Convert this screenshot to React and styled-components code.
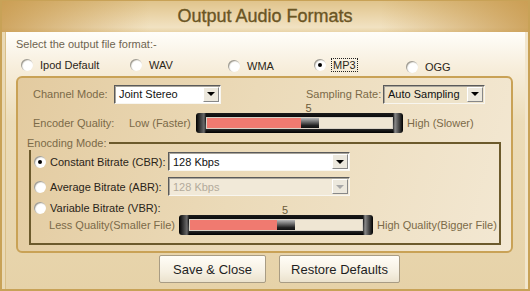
import styled, { createGlobalStyle } from 'styled-components';

const GlobalStyle = createGlobalStyle`
  html, body {
    margin: 0;
    padding: 0;
    background: #ffffff;
  }
  body {
    font-family: "Liberation Sans", Arial, sans-serif;
    font-size: 11px;
  }
`;

const FORMATS = [
  { name: 'Ipod Default', width: 109, drop: 0 },
  { name: 'WAV', width: 98, drop: 0 },
  { name: 'WMA', width: 86, drop: 1 },
  { name: 'MP3', width: 92, drop: 0, checked: true },
  { name: 'OGG', width: 80, drop: 3 },
];

function Radio({ checked }) {
  return <RadioDot $checked={checked} />;
}

function Dropdown({ value, width, $tint, disabled }) {
  return (
    <SelectBox $width={width} $tint={$tint} $disabled={disabled}>
      <SelectValue $disabled={disabled}>{value}</SelectValue>
      <DropButton>
        <Arrow $disabled={disabled} />
      </DropButton>
    </SelectBox>
  );
}

function Slider({ width, value, max }) {
  const track = width - 20;
  const pos = (value / max) * track;
  return (
    <SliderFrame $width={width}>
      <Tick style={{ left: 10 + pos + 9 }}>{value}</Tick>
      <Track>
        <Fill style={{ width: pos }} />
        <Thumb />
        <Rest />
      </Track>
    </SliderFrame>
  );
}

function App() {
  return (
    <>
      <GlobalStyle />
      <Window>
        <TitleBar>Output Audio Formats</TitleBar>
        <Body>
          <Prompt>Select the output file format:-</Prompt>
          <FormatRow>
            {FORMATS.map((f) => (
              <FormatOption key={f.name} $width={f.width} $drop={f.drop}>
                <Radio checked={f.checked} />
                <OptionText $focus={f.checked}>{f.name}</OptionText>
              </FormatOption>
            ))}
          </FormatRow>

          <Panel>
            <PanelRow>
              <FieldLabel $width={81}>Channel Mode:</FieldLabel>
              <Dropdown value="Joint Stereo" width={107} />
              <FieldLabel $width={77} $gap={85}>
                Sampling Rate:
              </FieldLabel>
              <Dropdown value="Auto Sampling" width={102} $tint />
            </PanelRow>

            <PanelRow $top={9}>
              <FieldLabel $width={96}>Encoder Quality:</FieldLabel>
              <FieldLabel $width={67}>Low (Faster)</FieldLabel>
              <Slider width={207} value={5} max={10} />
              <FieldLabel $gap={4}>High (Slower)</FieldLabel>
            </PanelRow>

            <Group>
              <Legend>Enocding Mode:</Legend>
              <ModeRow>
                <Radio checked />
                <ModeText>Constant Bitrate (CBR):</ModeText>
                <Dropdown value="128 Kbps" width={182} />
              </ModeRow>
              <ModeRow $top={6}>
                <Radio />
                <ModeText>Average Bitrate (ABR):</ModeText>
                <Dropdown value="128 Kbps" width={182} disabled />
              </ModeRow>
              <ModeRow $top={5} $short>
                <Radio />
                <ModeText>Variable Bitrate (VBR):</ModeText>
              </ModeRow>
              <VbrRow>
                <FieldLabel $width={145} $right>
                  Less Quality(Smaller File)
                </FieldLabel>
                <Slider width={194} value={5} max={10} />
                <FieldLabel $gap={4}>High Quality(Bigger File)</FieldLabel>
              </VbrRow>
            </Group>
          </Panel>

          <ButtonRow>
            <Button $width={107}>Save &amp; Close</Button>
            <Button $width={121}>Restore Defaults</Button>
          </ButtonRow>
        </Body>
      </Window>
    </>
  );
}

export default App;

// STYLES
const Window = styled.div`
  width: 530px;
  height: 291px;
  box-sizing: border-box;
  border: 2px solid #c8a257;
  border-top-width: 1px;
  display: flex;
  flex-direction: column;
  overflow: hidden;
  background: #e6d2a8;
`;

const TitleBar = styled.div`
  height: 31px;
  flex: none;
  text-align: center;
  line-height: 31px;
  font-size: 18px;
  color: #6a5524;
  -webkit-text-stroke: 0.35px #6a5524;
  background:
    linear-gradient(to right, rgba(196, 146, 66, 0.75), rgba(196, 146, 66, 0) 28%, rgba(196, 146, 66, 0) 72%, rgba(196, 146, 66, 0.75)),
    linear-gradient(to bottom, #e0c48c, #ead4a8 45%, #f1e2c2 85%, #e9d4a8);
`;

const Body = styled.div`
  flex: 1;
  display: flex;
  flex-direction: column;
  padding-top: 5px;
  background: linear-gradient(to bottom, #fffefa 0, #f7eedc 35px, #ecdcb8 90px, #e6d2a8 100%);
  box-shadow: inset 3px 0 0 #ead9b4, inset 4px 0 0 #d9bf88, inset -3px 0 0 #f2e6cc;
`;

const Prompt = styled.div`
  margin-left: 14px;
  line-height: 14px;
  color: #6e6450;
`;

const FormatRow = styled.div`
  display: flex;
  margin: 7px 0 0 19px;
  height: 14px;
`;

const FormatOption = styled.label`
  width: ${(p) => p.$width}px;
  display: flex;
  align-items: center;
  gap: 5px;
  margin-top: ${(p) => p.$drop}px;
  color: #2c2618;
`;

const OptionText = styled.span`
  line-height: 12px;
  padding: 0 1px;
  border: 1px dotted ${(p) => (p.$focus ? '#222' : 'transparent')};
`;

const RadioDot = styled.span`
  flex: none;
  position: relative;
  width: 12px;
  height: 12px;
  border-radius: 50%;
  background: radial-gradient(circle at 60% 60%, #ffffff 45%, #ecebe6 70%, #c9c6bd 100%);
  box-shadow: inset 1px 1px 1px #9a968c;

  &::after {
    content: '';
    display: ${(p) => (p.$checked ? 'block' : 'none')};
    position: absolute;
    left: 4px;
    top: 4px;
    width: 4px;
    height: 4px;
    border-radius: 50%;
    background: #000;
  }
`;

const Panel = styled.div`
  margin: 4px 0 0 14px;
  width: 497px;
  height: 177px;
  box-sizing: border-box;
  border: 2px solid #c9a256;
  border-radius: 6px;
  padding-top: 6px;
  background: linear-gradient(105deg, #e3cba0 0%, #ebdab8 45%, #f3e8d3 100%);
`;

const PanelRow = styled.div`
  display: flex;
  align-items: center;
  height: 20px;
  margin-top: ${(p) => p.$top || 0}px;
  padding-left: 15px;
`;

const FieldLabel = styled.span`
  flex: none;
  width: ${(p) => (p.$width ? `${p.$width}px` : 'auto')};
  margin-left: ${(p) => p.$gap || 0}px;
  text-align: ${(p) => (p.$right ? 'right' : 'left')};
  padding-right: ${(p) => (p.$right ? '4px' : '0')};
  box-sizing: border-box;
  color: #7b6a48;
  white-space: nowrap;
`;

const SelectBox = styled.div`
  flex: none;
  width: ${(p) => p.$width}px;
  height: 19px;
  box-sizing: border-box;
  display: flex;
  align-items: center;
  border: 1px solid;
  border-color: #5a5a5a #f8f6f0 #f8f6f0 #5a5a5a;
  box-shadow: inset 1px 1px 0 #a8a49a;
  background: ${(p) => (p.$disabled ? '#f1e9d8' : p.$tint ? '#eee3ca' : '#ffffff')};
`;

const SelectValue = styled.span`
  flex: 1;
  padding-left: 4px;
  color: ${(p) => (p.$disabled ? '#b3ab9c' : '#111')};
`;

const DropButton = styled.span`
  flex: none;
  width: 16px;
  height: 15px;
  margin-right: 1px;
  box-sizing: border-box;
  display: flex;
  align-items: center;
  justify-content: center;
  border: 1px solid;
  border-color: #ffffff #888 #888 #ffffff;
  background: #ece8dd;
`;

const Arrow = styled.span`
  width: 0;
  height: 0;
  border-left: 4px solid transparent;
  border-right: 4px solid transparent;
  border-top: 4px solid ${(p) => (p.$disabled ? '#a8a8a8' : '#000')};
`;

const SliderFrame = styled.div`
  flex: none;
  position: relative;
  width: ${(p) => p.$width}px;
  height: 20px;
  box-sizing: border-box;
  padding: 4px 10px 4px 10px;
  border-radius: 3px;
  background:
    linear-gradient(to right, #000 0, #6a6a6a 8px, rgba(0, 0, 0, 0) 10px, rgba(0, 0, 0, 0) calc(100% - 10px), #8a8a8a calc(100% - 8px), #000 100%),
    linear-gradient(to bottom, #1a1a1a, #050505 30%, #3a3a3a 70%, #000);
`;

const Tick = styled.span`
  position: absolute;
  top: -10px;
  transform: translateX(-50%);
  font-size: 11px;
  line-height: 10px;
  color: #6b5b3a;
`;

const Track = styled.div`
  display: flex;
  height: 100%;
  box-sizing: border-box;
  border: 1px solid #d8d2c6;
`;

const Fill = styled.div`
  flex: none;
  background: #f07a70;
`;

const Thumb = styled.div`
  flex: none;
  width: 18px;
  background: linear-gradient(to bottom, #b8b8b8, #6a6a6a 40%, #222 75%, #111);
`;

const Rest = styled.div`
  flex: 1;
  background: #efe6d3;
`;

const Group = styled.fieldset`
  margin: 3px 0 0 11px;
  padding: 2px 0 0 3px;
  width: 472px;
  height: 109px;
  box-sizing: border-box;
  border: 2px solid #6c5a2c;
  min-width: 0;
`;

const Legend = styled.legend`
  margin-left: -7px;
  padding: 0 2px 0 0;
  line-height: 14px;
  color: #7b6a48;
`;

const ModeRow = styled.div`
  display: grid;
  grid-template-columns: 16px 118px auto;
  align-items: center;
  height: ${(p) => (p.$short ? 14 : 19)}px;
  margin-top: ${(p) => p.$top || 0}px;
`;

const ModeText = styled.span`
  color: #2a2418;
  white-space: nowrap;
`;

const VbrRow = styled.div`
  display: flex;
  align-items: center;
  height: 20px;
  margin-top: 0;
`;

const ButtonRow = styled.div`
  display: flex;
  gap: 13px;
  margin: 2px 0 0 157px;
`;

const Button = styled.button`
  width: ${(p) => p.$width}px;
  height: 28px;
  padding: 0;
  border: 1px solid #a89c84;
  border-radius: 2px;
  background: linear-gradient(to bottom, #fffdf7, #f6f0e2 60%, #ebe2cd);
  font-family: "Liberation Sans", Arial, sans-serif;
  font-size: 13px;
  color: #1e1e1e;
`;
